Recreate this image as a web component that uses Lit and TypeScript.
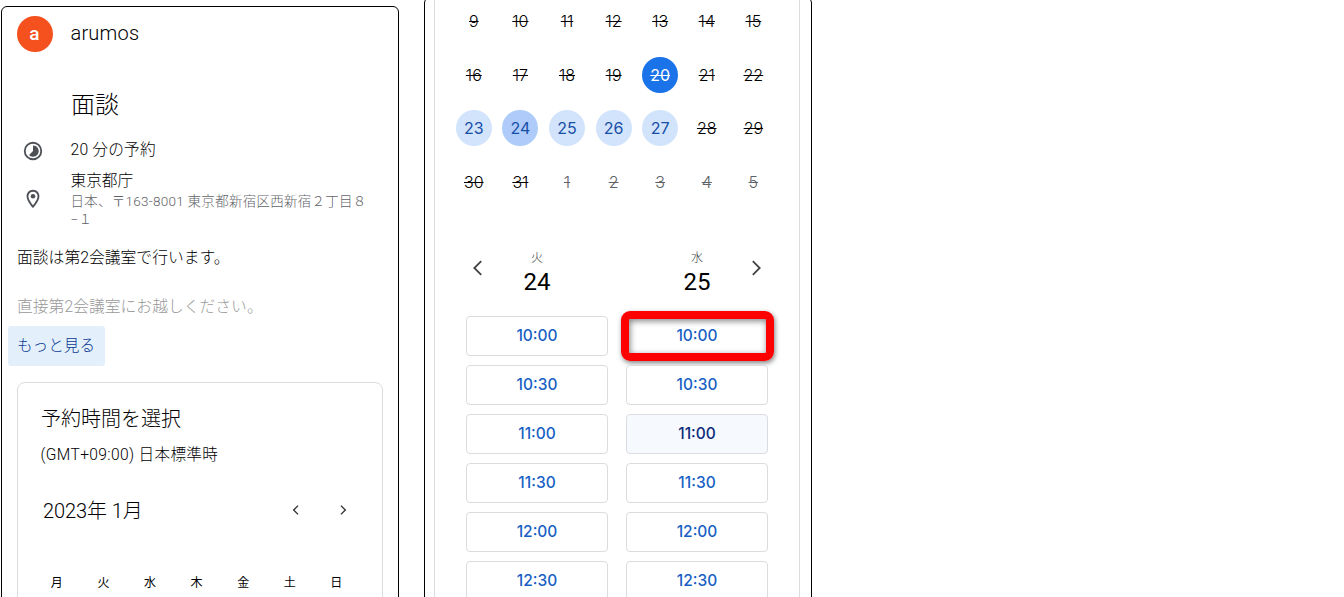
import { LitElement, html, css, svg } from 'lit';
import { customElement, property } from 'lit/decorators.js';
import { classMap } from 'lit/directives/class-map.js';

type DayState = 'past' | 'today' | 'open' | 'selected' | 'outside';

interface Day {
  label: number;
  state: DayState;
}

interface SlotColumn {
  weekday: string;
  day: number;
  active?: string;
  marked?: string;
}

const WEEKDAYS = ['月', '火', '水', '木', '金', '土', '日'];
const TIMES = ['10:00', '10:30', '11:00', '11:30', '12:00', '12:30'];

const COLUMNS: SlotColumn[] = [
  { weekday: '火', day: 24 },
  { weekday: '水', day: 25, active: '11:00', marked: '10:00' },
];

function stateOf(day: number): DayState {
  if (day === 20) return 'today';
  if (day === 24) return 'selected';
  if (day >= 23 && day <= 27) return 'open';
  return 'past';
}

const DAYS: Day[] = [
  ...Array.from({ length: 23 }, (_, i) => ({ label: i + 9, state: stateOf(i + 9) })),
  ...Array.from({ length: 5 }, (_, i) => ({ label: i + 1, state: 'outside' as DayState })),
];

const chevron = {
  left: svg`<path d="M15.500 4.500 8 12l7.500 7.500" />`,
  right: svg`<path d="M8.500 4.500 16 12l-7.500 7.500" />`,
};

@customElement('booking-info')
export class BookingInfo extends LitElement {
  static styles = css`
    :host {
      display: block;
      box-sizing: border-box;
      width: 398px;
      height: 610px;
      padding: 9px 15px 0;
      border: 1px solid #000;
      border-radius: 6px;
      color: #000;
      font-weight: 300;
    }
    svg {
      display: block;
    }
    .owner {
      display: flex;
      align-items: center;
      gap: 18px;
      height: 36px;
      margin-left: -0.5px;
      font-size: 20px;
      letter-spacing: 0.2px;
    }
    .owner span {
      padding-bottom: 2px;
    }
    .avatar {
      width: 36px;
      height: 36px;
      border-radius: 50%;
      background: #f4511e;
      color: #fff;
      font-size: 19px;
      font-weight: 500;
      line-height: 35px;
      text-align: center;
    }
    h1 {
      margin: 36px 0 0 54px;
      font-size: 24px;
      font-weight: 300;
      line-height: 34px;
    }
    .row {
      display: grid;
      grid-template-columns: 53.5px 1fr;
      align-items: center;
    }
    .row svg {
      margin-left: 4.5px;
      fill: #4d5156;
    }
    .duration {
      height: 24px;
      margin-top: 15px;
      font-size: 15.7px;
      letter-spacing: 0.2px;
    }
    .duration svg {
      margin-top: 2px;
    }
    .duration span {
      padding-bottom: 2px;
    }
    .place {
      height: 60px;
      margin-top: 8px;
    }
    .place-name {
      font-size: 15.7px;
      line-height: 22px;
    }
    .address {
      color: #5f6368;
      font-size: 13.5px;
      letter-spacing: 0.27px;
      line-height: 18px;
      white-space: nowrap;
    }
    .note {
      margin-top: 17px;
      font-size: 15.8px;
      line-height: 24px;
    }
    .note.faded {
      margin-top: 25px;
      color: #999;
    }
    .more {
      display: block;
      width: 97px;
      height: 40px;
      margin: 7px 0 0 -9px;
      padding: 0 1px 4px 0;
      border: 0;
      border-radius: 3px;
      background: #e3effb;
      color: #0b3a94;
      font: inherit;
      font-size: 15.6px;
    }
    .picker {
      box-sizing: border-box;
      width: 366px;
      height: 240px;
      margin-top: 16px;
      padding: 20px 23px 0;
      border: 1px solid #dadce0;
      border-radius: 8px;
    }
    h2 {
      margin: 0;
      font-size: 20px;
      font-weight: 300;
      line-height: 32px;
    }
    .zone {
      margin: 8px 0 0 -0.5px;
      font-size: 15.6px;
      letter-spacing: 0.35px;
      line-height: 24px;
    }
    .month {
      display: flex;
      align-items: center;
      height: 30px;
      margin-top: 28px;
      padding-left: 2px;
      font-size: 20px;
      letter-spacing: -0.1px;
    }
    .month span {
      flex: 1;
      padding-bottom: 2px;
    }
    .month svg {
      margin-right: 31px;
      fill: none;
      stroke: #333;
      stroke-width: 2.4;
    }
    .month svg:last-child {
      margin-right: 8px;
    }
    .weekdays {
      display: grid;
      grid-template-columns: repeat(7, 46.6px);
      margin: 49px 0 0 -7.5px;
      font-size: 12px;
      font-weight: 400;
      line-height: 18px;
      text-align: center;
    }
  `;

  render() {
    return html`
      <div class="owner">
        <div class="avatar">a</div>
        <span>arumos</span>
      </div>
      <h1>面談</h1>
      <div class="row duration">
        <svg width="22" height="22" viewBox="0 0 24 24">
          <path
            fill-rule="evenodd"
            d="M12 2a10 10 0 1 0 0 20 10 10 0 0 0 0-20zm0 2a8 8 0 1 1 0 16 8 8 0 0 1 0-16z"
          />
          <path d="M12 6v6l-4.3 4.3A6.1 6.1 0 1 0 12 6z" />
        </svg>
        <span>20 分の予約</span>
      </div>
      <div class="row place">
        <svg width="22" height="22" viewBox="0 0 24 24">
          <path
            d="M12 2C8.1 2 5 5.1 5 9c0 5.3 7 13 7 13s7-7.700 7-13c0-3.900-3.100-7-7-7zM7 9a5 5 0 0 1 10 0c0 2.900-2.900 7.200-5 9.900C9.900 16.200 7 11.900 7 9z"
          />
          <circle cx="12" cy="9" r="2.5" />
        </svg>
        <div>
          <div class="place-name">東京都庁</div>
          <div class="address">日本、〒163-8001 東京都新宿区西新宿２丁目８<br />−１</div>
        </div>
      </div>
      <div class="note">面談は第2会議室で行います。</div>
      <div class="note faded">直接第2会議室にお越しください。</div>
      <button class="more">もっと見る</button>
      <section class="picker">
        <h2>予約時間を選択</h2>
        <div class="zone">(GMT+09:00) 日本標準時</div>
        <div class="month">
          <span>2023年 1月</span>
          <svg width="16" height="14" viewBox="0 0 24 24">${chevron.left}</svg>
          <svg width="16" height="14" viewBox="0 0 24 24">${chevron.right}</svg>
        </div>
        <div class="weekdays">${WEEKDAYS.map((d) => html`<span>${d}</span>`)}</div>
      </section>
    `;
  }
}

@customElement('slot-button')
export class SlotButton extends LitElement {
  @property() time = '';
  @property({ type: Boolean }) active = false;
  @property({ type: Boolean }) marked = false;

  static styles = css`
    :host {
      display: block;
      position: relative;
    }
    button {
      display: block;
      box-sizing: border-box;
      width: 142px;
      height: 40px;
      padding: 0 0 1px;
      border: 1px solid #dadce0;
      border-radius: 4px;
      background: #fff;
      color: #185fc4;
      font-family: Inter, 'Liberation Sans', sans-serif;
      font-size: 15.5px;
      font-weight: 500;
    }
    .active {
      background: #f6f9fe;
      color: #0b2a7a;
    }
    .marker {
      position: absolute;
      inset: -5px -6px -5px -5px;
      box-sizing: border-box;
      border: 8px solid #fe0000;
      border-radius: 9px;
      box-shadow: 1px 2px 5px rgba(0, 0, 0, 0.5), inset 1px 2px 6px rgba(0, 0, 0, 0.5);
      pointer-events: none;
    }
  `;

  render() {
    return html`
      <button class=${classMap({ active: this.active })}>${this.time}</button>
      ${this.marked ? html`<div class="marker"></div>` : ''}
    `;
  }
}

@customElement('booking-slots')
export class BookingSlots extends LitElement {
  static styles = css`
    :host {
      display: block;
      box-sizing: border-box;
      width: 388px;
      height: 620px;
      margin-top: -3px;
      padding: 0 11px 0 9px;
      border: 1px solid #000;
      border-radius: 6px;
      color: #000;
    }
    .card {
      box-sizing: border-box;
      height: 100%;
      border: solid #dadce0;
      border-width: 0 1px;
    }
    .days {
      display: grid;
      grid-template-columns: repeat(7, 46.6px);
      grid-auto-rows: 53.6px;
      place-items: center;
      margin-top: -3.8px;
      padding-left: 15.500px;
      font-family: Inter, 'Liberation Sans', sans-serif;
      font-size: 16px;
    }
    .day {
      width: 36px;
      height: 36px;
      border-radius: 50%;
      line-height: 36px;
      text-align: center;
    }
    .past,
    .today,
    .outside {
      text-decoration: line-through;
    }
    .past,
    .outside {
      font-weight: 300;
    }
    .outside {
      color: #5f6368;
    }
    .today {
      background: #1a73e8;
      color: #fff;
    }
    .open {
      background: #d2e3fc;
      color: #174ea6;
    }
    .selected {
      background: #aecbfa;
      color: #174ea6;
    }
    .slots {
      display: flex;
      gap: 18px;
      margin-top: 39.3px;
      padding-left: 31px;
    }
    .column {
      display: flex;
      flex-direction: column;
      gap: 9.1px;
      width: 142px;
    }
    header {
      display: flex;
      align-items: center;
      height: 60px;
      margin-bottom: -1px;
    }
    .nav {
      width: 22px;
      padding-bottom: 19px;
    }
    .nav svg {
      display: block;
      margin-left: 1px;
      fill: none;
      stroke: #444;
      stroke-width: 2;
    }
    .nav:last-child svg {
      margin-left: -1px;
    }
    .date {
      flex: 1;
      font-size: 24px;
      line-height: 28px;
      text-align: center;
    }
    .date small {
      display: block;
      margin-top: -1px;
      color: #3c4043;
      font-size: 12px;
      font-weight: 300;
      line-height: 20px;
    }
    .date span {
      display: block;
      padding-bottom: 11px;
    }
  `;

  render() {
    return html`
      <div class="card">
        <div class="days">
          ${DAYS.map((d) => html`<div class="day ${d.state}">${d.label}</div>`)}
        </div>
        <div class="slots">${COLUMNS.map((c, i) => this._renderColumn(c, i))}</div>
      </div>
    `;
  }

  _renderColumn(column: SlotColumn, index: number) {
    return html`
      <div class="column">
        <header>
          <div class="nav">${index === 0 ? this._renderArrow(chevron.left) : ''}</div>
          <div class="date">
            <small>${column.weekday}</small>
            <span>${column.day}</span>
          </div>
          <div class="nav">${index === 1 ? this._renderArrow(chevron.right) : ''}</div>
        </header>
        ${TIMES.map(
          (t) => html`
            <slot-button
              .time=${t}
              .active=${t === column.active}
              .marked=${t === column.marked}
            ></slot-button>
          `
        )}
      </div>
    `;
  }

  _renderArrow(path: unknown) {
    return html`<svg width="22" height="22" viewBox="0 0 24 24">${path}</svg>`;
  }
}

@customElement('app-root')
export class AppRoot extends LitElement {
  static styles = css`
    :host {
      display: flex;
      align-items: flex-start;
      gap: 25px;
      box-sizing: border-box;
      width: 1344px;
      height: 597px;
      padding-left: 1px;
      overflow: hidden;
      background: #fff;
      font-family: Roboto, 'Noto Sans CJK JP', sans-serif;
    }
    booking-info {
      flex: none;
      margin-top: 6px;
    }
    booking-slots {
      flex: none;
    }
  `;

  render() {
    return html`
      <booking-info></booking-info>
      <booking-slots></booking-slots>
    `;
  }
}
